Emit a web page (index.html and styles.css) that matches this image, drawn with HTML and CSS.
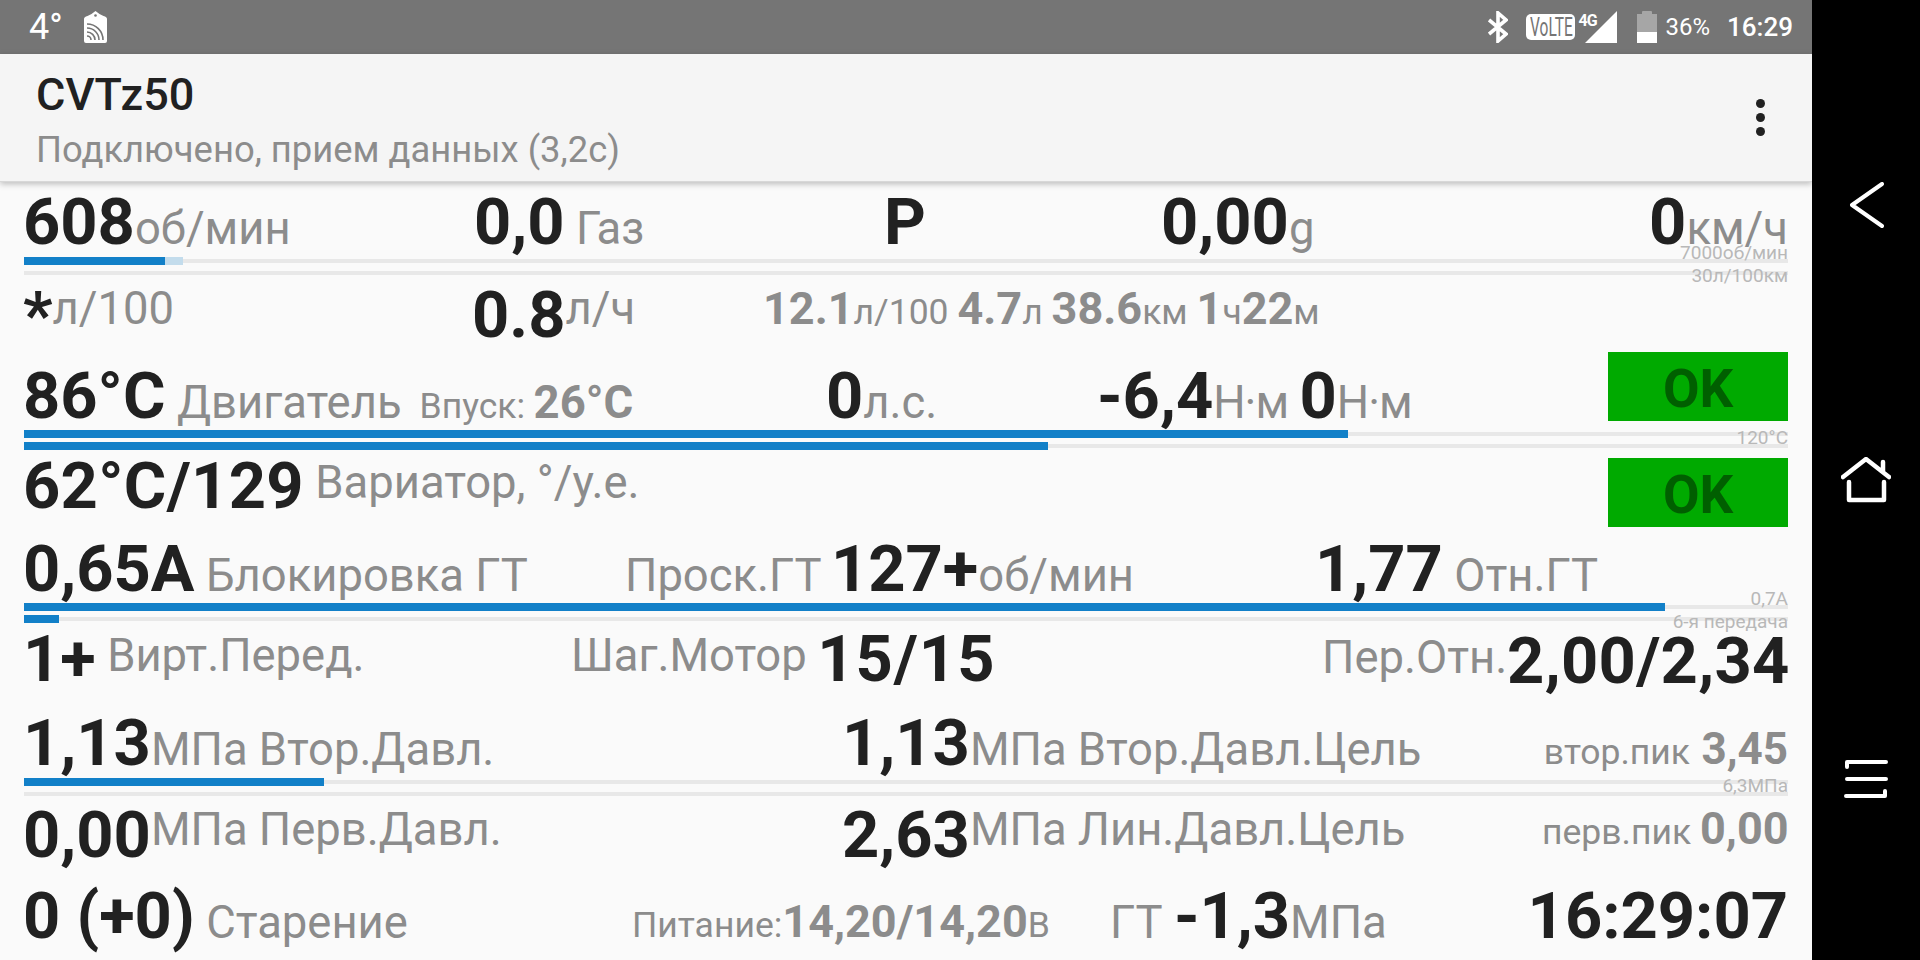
FILE: index.html
```html
<!DOCTYPE html>
<html lang="ru">
	<head>
		<meta charset="UTF-8">
		<title>CVTz50</title>
		<link rel="stylesheet" href="styles.css">
	</head>
	<body>
		<div class="screen">
			<div class="phone">
				<!-- STATUS BAR -->
				<div class="statusBar">
					<span class="temp">4°</span>
					<svg class="tagIcon" width="23" height="32" viewBox="0 0 23 32">
						<path d="M11.5 0l4 3 4 2q3.500 1 3.500 3v22q0 2-2 2H2q-2 0-2-2V8q0-2 3.500-3l4-2z" fill="#fff"/>
						<circle cx="11.500" cy="4.500" r="1.300" fill="#757575"/>
						<g fill="none" stroke="#757575" stroke-width="1.600">
							<path d="M3 13a16 16 0 0 1 16 16"/>
							<path d="M3 17a12 12 0 0 1 12 12"/>
							<path d="M3 21a8 8 0 0 1 8 8"/>
							<path d="M3 25a4 4 0 0 1 4 4"/>
						</g>
					</svg>
					<span class="spacer"></span>
					<svg class="btIcon" width="20" height="32" viewBox="0 0 20 32">
						<path d="M1 9l17 14-8 7V2l8 7L1 23" fill="none" stroke="#fff" stroke-width="3.600"/>
					</svg>
					<span class="volte"><span class="volteText">VoLTE</span></span>
					<span class="net">
						<span class="netText">4G</span>
						<svg width="32" height="32" viewBox="0 0 32 32"><path d="M32 0v32H0z" fill="#fff"/></svg>
					</span>
					<svg class="battery" width="20" height="32" viewBox="0 0 20 32">
						<path d="M5 3V1q0-1 1-1h8q1 0 1 1v2h5v20H0V3z" fill="#a6a6a6"/>
						<path d="M0 21h20v11H0z" fill="#fff"/>
					</svg>
					<span class="percent">36%</span>
					<span class="clock">16:29</span>
				</div>

				<!-- APP BAR -->
				<div class="appBar">
					<div class="appText">
						<div class="appTitle">CVTz50</div>
						<div class="appSub">Подключено, прием данных (3,2с)</div>
					</div>
					<div class="menuDots"><i></i><i></i><i></i></div>
				</div>

				<!-- DATA -->
				<div class="content">
					<div class="row rowSpeed">
						<div><span class="val">608</span><span class="unit">об/мин</span></div>
						<div><span class="val">0,0</span> <span class="unit">Газ</span></div>
						<div><span class="val">P</span></div>
						<div><span class="val">0,00</span><span class="unit">g</span></div>
						<div class="right"><span class="val">0</span><span class="unit">км/ч</span></div>
					</div>
					<div class="gauge gaugeTall">
						<div class="track"><div class="fill" style="width:141px"></div><div class="fill fillLight" style="width:18px"></div></div>
						<div class="track"></div>
						<span class="mark markHigh">7000об/мин</span>
						<span class="mark markLow">30л/100км</span>
					</div>

					<div class="row rowFuel">
						<div><span class="val">*</span><span class="unit lift13">л/100</span></div>
						<div><span class="val">0.8</span><span class="unit lift13">л/ч</span></div>
						<div class="cellTrip"><span class="sval">12.1</span><span class="sunit">л/100</span> <span class="sval">4.7</span><span class="sunit">л</span> <span class="sval">38.6</span><span class="sunit">км</span> <span class="sval">1</span><span class="sunit">ч</span><span class="sval">22</span><span class="sunit">м</span></div>
					</div>

					<div class="row rowEngine">
						<div><span class="val">86°C</span> <span class="unit">Двигатель</span><span class="sunit inlet">Впуск:</span> <span class="tempVal">26°C</span></div>
						<div><span class="val">0</span><span class="unit">л.с.</span></div>
						<div><span class="val">-6,4</span><span class="unit narrow">Н·м</span> <span class="val">0</span><span class="unit narrow">Н·м</span></div>
						<div class="okBox">OK</div>
					</div>
					<div class="gauge gaugeShort">
						<div class="track"><div class="fill" style="width:1324px"></div></div>
						<div class="track"><div class="fill" style="width:1024px"></div></div>
						<span class="mark markMid">120°C</span>
					</div>

					<div class="row rowCvt">
						<div><span class="val wideSome">62°C/129</span> <span class="unit lift10">Вариатор, °/у.е.</span></div>
						<div class="okBox okLow">OK</div>
					</div>

					<div class="row rowLock">
						<div><span class="val">0,65A</span> <span class="unit">Блокировка ГТ</span></div>
						<div class="tight"><span class="unit">Проск.ГТ</span> <span class="val">127+</span><span class="unit">об/мин</span></div>
						<div><span class="val">1,77</span> <span class="unit">Отн.ГТ</span></div>
					</div>
					<div class="gauge gaugeLock">
						<div class="track"><div class="fill" style="width:1641px"></div></div>
						<div class="track"><div class="fill" style="width:35px"></div></div>
						<span class="mark markHigh">0,7A</span>
						<span class="mark markLow">6-я передача</span>
					</div>

					<div class="row rowGear">
						<div><span class="val">1+</span> <span class="unit lift10">Вирт.Перед.</span></div>
						<div class="tighter"><span class="unit lift10">Шаг.Мотор</span> <span class="val wideMore">15/15</span></div>
						<div class="right"><span class="unit lift10">Пер.Отн.</span><span class="val wideSome">2,00/2,34</span></div>
					</div>

					<div class="row rowSecondary">
						<div><span class="val">1,13</span><span class="unit">МПа Втор.Давл.</span></div>
						<div><span class="val">1,13</span><span class="unit">МПа Втор.Давл.Цель</span></div>
						<div class="right cellDown"><span class="sunit">втор.пик</span> <span class="sval peakHigh">3,45</span></div>
					</div>
					<div class="gauge gaugePress">
						<div class="track"><div class="fill" style="width:300px"></div></div>
						<div class="track"></div>
						<span class="mark markMid">6,3МПа</span>
					</div>

					<div class="row rowPrimary">
						<div><span class="val">0,00</span><span class="unit lift12">МПа Перв.Давл.</span></div>
						<div><span class="val">2,63</span><span class="unit lift12">МПа Лин.Давл.Цель</span></div>
						<div class="right cellTrip"><span class="sunit">перв.пик</span> <span class="sval peakLow">0,00</span></div>
					</div>

					<div class="row rowLast">
						<div><span class="val">0 (+0)</span> <span class="unit">Старение</span></div>
						<div class="cellDown"><span class="power">Питание:</span><span class="sval">14,20/14,20</span><span class="power">В</span></div>
						<div><span class="unit">ГТ</span> <span class="val">-1,3</span><span class="unit">МПа</span></div>
						<div class="right"><span class="val">16:29:07</span></div>
					</div>
				</div>
			</div>

			<!-- NAVIGATION -->
			<div class="navBar">
				<svg width="36" height="46" viewBox="0 0 36 46">
					<path d="M33 2L3 23l30 21" fill="none" stroke="#fff" stroke-width="4" stroke-linecap="round" stroke-linejoin="round"/>
				</svg>
				<svg width="50" height="46" viewBox="0 0 50 46">
					<path d="M2 20L25 2l23 18M42 5v9M8 25v18h35V25" fill="none" stroke="#fff" stroke-width="4.500" stroke-linecap="round" stroke-linejoin="round"/>
				</svg>
				<svg width="44" height="42" viewBox="0 0 44 42">
					<path d="M3 9V4h39M3 21h39M2 38h39v-5" fill="none" stroke="#fff" stroke-width="4" stroke-linecap="round" stroke-linejoin="round"/>
				</svg>
			</div>
		</div>
	</body>
</html>
```

FILE: styles.css
```css
body {
	margin: 0;
	overflow: hidden;
	font-family: Roboto, "Liberation Sans", sans-serif;
	background: #000;
}

.screen {
	display: flex;
	width: 1920px;
	height: 960px;
}

.phone {
	display: flex;
	flex-direction: column;
	width: 1812px;
	height: 960px;
	background: #fafafa;
}

/*---------------------------STATUS BAR---------------------------*/
.statusBar {
	display: flex;
	align-items: center;
	height: 54px;
	padding: 0 19px 0 29px;
	background: #757575;
	color: #fff;
	box-sizing: border-box;
}

.temp {
	width: 55px;
	font-size: 36px;
}

.spacer {
	flex: 1;
}

.btIcon {
	margin-right: 18px;
}

.volte {
	display: flex;
	justify-content: center;
	width: 49px;
	height: 26px;
	border-radius: 5px;
	background: #fff;
	color: #757575;
	font-size: 25px;
	line-height: 27px;
}

.volteText {
	transform: scaleX(0.62);
}

.net {
	position: relative;
	width: 32px;
	height: 32px;
	margin: 0 20px 0 10px;
}

.netText {
	position: absolute;
	left: -7px;
	top: 0;
	font-size: 16px;
	font-weight: 700;
	letter-spacing: -1px;
}

.percent {
	margin-left: 8px;
	font-size: 24px;
}

.clock {
	margin-left: 17px;
	font-size: 26px;
	font-weight: 500;
}

/*---------------------------APP BAR---------------------------*/
.appBar {
	position: relative;
	z-index: 1;
	display: flex;
	justify-content: space-between;
	align-items: center;
	height: 128px;
	padding: 0 47px 0 36px;
	background: #f5f5f5;
	border-bottom: 1px solid #d8d8d8;
	box-shadow: 0 2px 6px rgba(0,0,0,0.25);
	box-sizing: border-box;
}

.appText {
	padding-top: 4px;
}

.appTitle {
	margin-top: 3px;
	font-size: 45px;
	font-weight: 500;
	line-height: 52px;
	color: #212121;
}

.appSub {
	margin-top: 6px;
	font-size: 36.4px;
	line-height: 46px;
	color: #8c8c8c;
	white-space: nowrap;
}

.menuDots {
	display: flex;
	flex-direction: column;
	gap: 5px;
}

.menuDots i {
	width: 9px;
	height: 9px;
	border-radius: 50%;
	background: #212121;
}

/*---------------------------DATA---------------------------*/
.content {
	padding-top: 2px;
}

.row {
	display: grid;
	padding: 0 24px 0 23px;
	font-size: 46px;
	line-height: 77px;
	white-space: nowrap;
	align-items: start;
}

.right {
	text-align: right;
}

.val {
	font-size: 65px;
	font-weight: 700;
	color: #212121;
}

.wideSome { letter-spacing: 0.3px; }
.wideMore { letter-spacing: 1px; }

.unit {
	font-size: 45.4px;
	line-height: 1;
	color: #8c8c8c;
}

.narrow { letter-spacing: -1px; }
.tight { word-spacing: -2px; }
.tighter { word-spacing: -1px; }

.sval {
	font-size: 45px;
	font-weight: 700;
	line-height: 1;
	color: #8c8c8c;
}

.peakHigh { font-size: 44px; }
.peakLow { margin-right: 2px; }

.sunit {
	font-size: 35.5px;
	line-height: 1;
	color: #8c8c8c;
}

.tempVal {
	margin-left: -3px;
	font-size: 45.5px;
	font-weight: 700;
	line-height: 1;
	color: #8c8c8c;
}

.inlet {
	margin-left: 18px;
}

.power {
	font-size: 35.5px;
	line-height: 1;
	color: #8c8c8c;
}

.lift10 { vertical-align: 10px; }
.lift12 { vertical-align: 12px; }
.lift13 { vertical-align: 13px; }

/* cells whose baseline sits off the row baseline */
.cellTrip { margin-top: -7px; word-spacing: -2.5px; }
.cellDown { margin-top: 5px; }

.okBox {
	height: 69px;
	margin-top: -6px;
	background: #00aa00;
	color: #005f00;
	font-size: 53px;
	font-weight: 700;
	line-height: 74px;
	text-align: center;
}

.okLow {
	margin-top: 10px;
}

.rowSpeed { height: 73px; grid-template-columns: 451px 410px 277px 1fr auto; }
.rowFuel { height: 81px; grid-template-columns: 449px 291px 1fr; }
.rowEngine { height: 72px; grid-template-columns: 803px 271px 511px 180px; }
.rowCvt { height: 83px; grid-template-columns: 1585px 180px; }
.rowLock { height: 72px; grid-template-columns: 602px 690px 1fr; }
.rowGear { height: 84px; padding-top: 1px; grid-template-columns: 548px 751px 1fr; }
.rowGear .right { margin-top: 2px; }
.rowSecondary { height: 73px; grid-template-columns: 819px 700px 1fr; }
.rowPrimary { height: 81px; grid-template-columns: 819px 700px 1fr; }
.rowLast { height: 82px; grid-template-columns: 609px 478px 300px 1fr; }

/*---------------------------GAUGES---------------------------*/
.gauge {
	position: relative;
	margin: 0 24px;
}

.gaugeTall { height: 20px; }
.gaugeShort { height: 18px; }
.gaugeLock { height: 17px; }
.gaugePress { height: 19px; }

.track {
	display: flex;
	height: 8px;
	margin-bottom: 4px;
	background: linear-gradient(#e8e8e8, #e8e8e8) center / 100% 4px no-repeat;
}

.fill {
	height: 100%;
	background: #1280c8;
}

.fillLight {
	background: #c3dcec;
}

.mark {
	position: absolute;
	right: 0;
	font-size: 19px;
	line-height: 20px;
	color: #b8b8b8;
	white-space: nowrap;
}

.markHigh { top: -14px; }
.markMid { top: -2px; }
.markLow { top: 9px; }

/*---------------------------NAVIGATION---------------------------*/
.navBar {
	display: flex;
	flex-direction: column;
	align-items: center;
	width: 108px;
	padding-top: 182px;
	background: #000;
	box-sizing: border-box;
}

.navBar svg:nth-child(1) { margin: 0 0 229px 2px; }
.navBar svg:nth-child(2) { margin-bottom: 255px; }
```
